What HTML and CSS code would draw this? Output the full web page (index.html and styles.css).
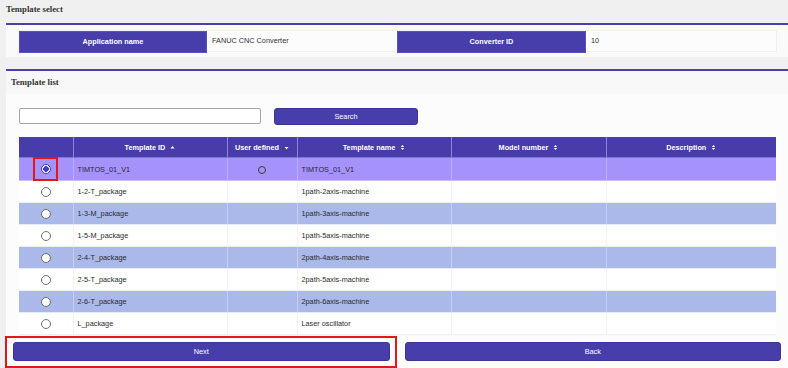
FILE: index.html
```html
<!DOCTYPE html>
<html lang="en">
<head>
<meta charset="UTF-8">
<title>Template select</title>
<link rel="stylesheet" href="styles.css">
</head>
<body>

<div class="page-title">Template select</div>

<section class="panel panel-top">
  <div class="info-box">
    <div class="info-label">Application name</div>
    <div class="info-value">FANUC CNC Converter</div>
    <div class="info-label">Converter ID</div>
    <div class="info-value">10</div>
  </div>
</section>

<section class="panel panel-list">
  <div class="panel-header">Template list</div>

  <div class="search-row">
    <input type="text" class="search-input">
    <button class="btn btn-search">Search</button>
  </div>

  <table class="tpl-table">
    <colgroup>
      <col style="width:54px">
      <col style="width:154px">
      <col style="width:70px">
      <col style="width:154px">
      <col style="width:155px">
      <col style="width:170px">
    </colgroup>
    <thead>
      <tr>
        <th></th>
        <th>Template ID <svg class="sort" width="5" height="7" viewBox="0 0 5 7"><path d="M0.5 4.5 L2.5 2 L4.5 4.5 Z" fill="#fff"/></svg></th>
        <th>User defined <svg class="sort" width="5" height="7" viewBox="0 0 5 7"><path d="M0.5 3 L2.5 5.5 L4.5 3 Z" fill="#fff"/></svg></th>
        <th>Template name <svg class="sort" width="5" height="7" viewBox="0 0 5 7"><path d="M0.8 3 L2.5 1 L4.2 3 Z M0.8 4 L2.5 6 L4.2 4 Z" fill="#fff"/></svg></th>
        <th>Model number <svg class="sort" width="5" height="7" viewBox="0 0 5 7"><path d="M0.8 3 L2.5 1 L4.2 3 Z M0.8 4 L2.5 6 L4.2 4 Z" fill="#fff"/></svg></th>
        <th>Description <svg class="sort" width="5" height="7" viewBox="0 0 5 7"><path d="M0.8 3 L2.5 1 L4.2 3 Z M0.8 4 L2.5 6 L4.2 4 Z" fill="#fff"/></svg></th>
      </tr>
    </thead>
    <tbody>
      <tr class="row-selected">
        <td class="col-radio"><span class="radio-mark"><span class="radio checked"></span></span></td>
        <td>TIMTOS_01_V1</td>
        <td class="col-user"><span class="user-flag"></span></td>
        <td>TIMTOS_01_V1</td>
        <td></td>
        <td></td>
      </tr>
      <tr>
        <td class="col-radio"><span class="radio"></span></td>
        <td>1-2-T_package</td>
        <td></td>
        <td>1path-2axis-machine</td>
        <td></td>
        <td></td>
      </tr>
      <tr class="row-alt">
        <td class="col-radio"><span class="radio"></span></td>
        <td>1-3-M_package</td>
        <td></td>
        <td>1path-3axis-machine</td>
        <td></td>
        <td></td>
      </tr>
      <tr>
        <td class="col-radio"><span class="radio"></span></td>
        <td>1-5-M_package</td>
        <td></td>
        <td>1path-5axis-machine</td>
        <td></td>
        <td></td>
      </tr>
      <tr class="row-alt">
        <td class="col-radio"><span class="radio"></span></td>
        <td>2-4-T_package</td>
        <td></td>
        <td>2path-4axis-machine</td>
        <td></td>
        <td></td>
      </tr>
      <tr>
        <td class="col-radio"><span class="radio"></span></td>
        <td>2-5-T_package</td>
        <td></td>
        <td>2path-5axis-machine</td>
        <td></td>
        <td></td>
      </tr>
      <tr class="row-alt">
        <td class="col-radio"><span class="radio"></span></td>
        <td>2-6-T_package</td>
        <td></td>
        <td>2path-6axis-machine</td>
        <td></td>
        <td></td>
      </tr>
      <tr>
        <td class="col-radio"><span class="radio"></span></td>
        <td>L_package</td>
        <td></td>
        <td>Laser oscillator</td>
        <td></td>
        <td></td>
      </tr>
    </tbody>
  </table>

  <div class="button-row">
    <div class="marked">
      <button class="btn btn-wide">Next</button>
    </div>
    <button class="btn btn-wide">Back</button>
  </div>
</section>

</body>
</html>
```

FILE: styles.css
```css
/* page */
body {
  margin: 0;
  padding: 0;
  background: #f0f0f0;
  font-family: 'Liberation Sans', Arial, sans-serif;
  font-size: 7.3px;
  color: #333;
}

.page-title {
  height: 23px;
  box-sizing: border-box;
  padding: 3px 0 0 6px;
  line-height: 12px;
  font-family: 'Liberation Serif', 'Times New Roman', serif;
  font-weight: bold;
  font-size: 8.7px;
  color: #333;
}

.panel {
  margin-left: 6px;
  border-top: 2px solid #4a40ad;
  background: #fafafa;
}

.panel-top {
  padding: 6px 12px 6px 13px;
  margin-bottom: 12px;
}

/* application / converter info */
.info-box {
  display: grid;
  grid-template-columns: 188px 190px 189px 1fr;
  height: 20px;
  background: #fcfcfc;
  box-shadow: 0 0 0 1px #f0f0f0;
}

.info-label {
  background: #473dab;
  color: #fff;
  font-weight: bold;
  text-align: center;
  line-height: 20px;
  border: 1px solid #5a50c0;
  box-sizing: border-box;
}

.info-value {
  line-height: 20px;
  padding-left: 5px;
  color: #333;
}

/* template list */
.panel-list {
  padding-bottom: 8px;
  background: #fcfcfc;
}

.panel-header {
  height: 23px;
  line-height: 23px;
  padding-left: 5px;
  background: #f8f8f8;
  font-family: 'Liberation Serif', 'Times New Roman', serif;
  font-weight: bold;
  font-size: 8.7px;
  color: #333;
}

.search-row {
  display: flex;
  align-items: flex-start;
  gap: 13px;
  padding: 14px 0 0 13px;
  height: 17px;
}

.search-input {
  width: 242px;
  height: 16px;
  box-sizing: border-box;
  margin: 0;
  border: 1px solid #a4a4a4;
  border-radius: 2px;
  background: #fff;
}

.btn {
  background: #473dab;
  color: #fff;
  border: 1px solid #3d3399;
  border-radius: 3px;
  font-family: 'Liberation Sans', Arial, sans-serif;
  font-size: 7.3px;
  padding: 0;
  margin: 0;
}

.btn-search {
  width: 144px;
  height: 17px;
}

.tpl-table {
  margin: 12px 0 0 13px;
  width: 757px;
  border-collapse: collapse;
  table-layout: fixed;
  background: #fff;
}

.tpl-table th {
  height: 20px;
  padding: 0;
  background: #473ca9;
  color: #fff;
  font-weight: bold;
  text-align: center;
  border-left: 1px solid #8e86d2;
  border-bottom: 1px solid #7f75d6;
}

.tpl-table th:first-child {
  border-left: none;
}

.sort {
  vertical-align: -1px;
  margin-left: 3px;
}

.tpl-table td {
  height: 21px;
  padding: 0 0 0 4px;
  border-left: 1px solid #f3f3f3;
  border-bottom: 1px solid #eeeeee;
  color: #2a2a2a;
  white-space: nowrap;
}

.tpl-table td:first-child {
  border-left: none;
}

.tpl-table tr.row-alt td {
  background: #abb8ea;
  border-left-color: #c6cff3;
  border-bottom-color: #e8ecfa;
}

.tpl-table tr.row-selected td {
  height: 22px;
  background: #a692fb;
  border-left-color: #bcaefc;
  border-bottom-color: #c8bcfd;
}

.tpl-table td.col-radio,
.tpl-table td.col-user {
  padding: 0;
  text-align: center;
}

.radio {
  display: inline-block;
  width: 10px;
  height: 10px;
  box-sizing: border-box;
  border: 1px solid #707070;
  border-radius: 50%;
  background: #fff;
  vertical-align: middle;
}

.radio.checked {
  border-color: #3b3bc8;
  background: radial-gradient(circle, #3d3dcf 0 2.6px, #fff 3px);
}

/* red annotation around the selected radio */
.radio-mark {
  display: inline-flex;
  align-items: center;
  justify-content: center;
  width: 21px;
  height: 20px;
  outline: 2px solid #e01818;
  vertical-align: middle;
}

.user-flag {
  display: inline-block;
  width: 8px;
  height: 8px;
  box-sizing: border-box;
  border: 1px solid #3a3a3a;
  border-radius: 50%;
  vertical-align: middle;
}

.button-row {
  display: grid;
  grid-template-columns: 1fr 1fr;
  gap: 15px;
  padding: 7px 7px 0 7px;
}

.btn-wide {
  width: 100%;
  height: 19px;
}

/* red annotation around Next */
.marked {
  position: relative;
  display: flex;
}

.marked::after {
  content: "";
  position: absolute;
  top: -6px;
  left: -8px;
  right: -7px;
  bottom: -7px;
  border: 2px solid #e01818;
  pointer-events: none;
}
```
